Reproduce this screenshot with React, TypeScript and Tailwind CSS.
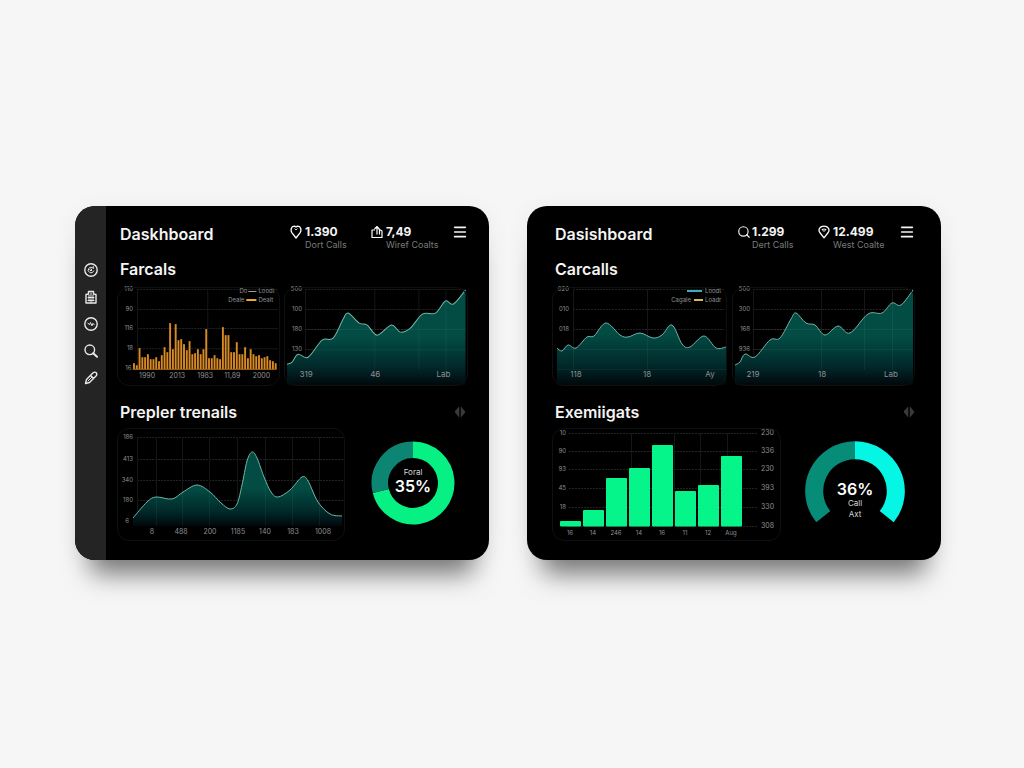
import React from 'react'
import { Search, Menu } from 'lucide-react'

type Point = [number, number]
type Label = [number, number, string]

// Catmull-Rom spline through the points, as cubic beziers
const curve = (pts: Point[]) => {
    let d = `M${pts[0][0]} ${pts[0][1]}`
    for (let i = 0; i < pts.length - 1; i++) {
        const a = pts[i - 1] ?? pts[i]
        const b = pts[i]
        const c = pts[i + 1]
        const e = pts[i + 2] ?? c
        d += ` C${b[0] + (c[0] - a[0]) / 6} ${b[1] + (c[1] - a[1]) / 6} ${c[0] - (e[0] - b[0]) / 6} ${c[1] - (e[1] - b[1]) / 6} ${c[0]} ${c[1]}`
    }
    return d
}

const Grid = ({ rows, cols, x1, x2, bottom }: { rows: number[], cols: number[], x1: number, x2: number, bottom: number }) => (
    <g stroke="#202323">
        {rows.map((y) => <path key={y} d={`M${x1} ${y + 0.5}H${x2}`} strokeDasharray="2 1" />)}
        {cols.map((x) => <path key={x} d={`M${x + 0.5} ${rows[0]}V${bottom}`} stroke="#141717" />)}
    </g>
)

const Labels = ({ items, size, anchor = 'middle' }: { items: Label[], size: number, anchor?: 'start' | 'middle' | 'end' }) => (
    <g fill="#8d9090" fontSize={size} textAnchor={anchor}>
        {items.map(([x, y, t], i) => <text key={i} x={x} y={y + 2}>{t}</text>)}
    </g>
)

const Area = ({ id, points, bottom, fadeFrom }: { id: string, points: Point[], bottom: number, fadeFrom: number }) => {
    const line = curve(points)
    const last = points[points.length - 1][0]
    return (
        <g>
            <linearGradient id={id} gradientUnits="userSpaceOnUse" x1="0" y1={fadeFrom} x2={0} y2={bottom}>
                <stop offset="0" stopColor="#024c43" />
                <stop offset="0.6" stopColor="#012a2b" />
                <stop offset="1" stopColor="#01080c" />
            </linearGradient>
            <path d={`${line} L${last} ${bottom} H${points[0][0]} Z`} fill={`url(#${id})`} />
            <path d={line} fill="none" stroke="#6fb5aa" />
        </g>
    )
}

const Frame = ({ title, width, height, children }: { title: string, width: number, height: number, children: React.ReactNode }) => (
    <div className="rounded-xl outline outline-[#0e1111] -outline-offset-1">
        <svg viewBox={`0 0 ${width} ${height}`} role="img" aria-label={title} className="block w-full overflow-visible">
            {children}
        </svg>
    </div>
)

const callBars = [6, 4, 21, 12, 12, 15, 10, 10, 12, 8, 14, 22, 17, 46, 20, 45, 29, 30, 25, 19, 28, 15, 16, 20, 15, 20, 40, 11, 11, 14, 11, 10, 42, 34, 34, 17, 17, 27, 15, 15, 22, 11, 20, 15, 13, 14, 11, 12, 13, 9, 8, 6]

const FarcalsBars = () => (
    <Frame title="Farcals" width={163} height={99}>
        <Grid rows={[2, 22, 41, 61]} cols={[20, 90]} x1={20} x2={160} bottom={82} />
        {callBars.map((h, i) => (
            <rect key={i} x={16 + i * 2.77} y={82 - h} width="1.9" height={h} fill="#d98a22" />
        ))}
        <path d="M16 82H159" stroke="#b8701a" />
        <Labels size={6} anchor="end" items={[[16, 2, '110'], [16, 22, '90'], [16, 41, '116'], [16, 61, '18'], [16, 81, '16.']]} />
        <Labels size={7} items={[[30, 89, '1990'], [60, 89, '2013'], [88, 89, '1983'], [115, 89, '11,89'], [144, 89, '2000']]} />
        <Labels size={6} anchor="end" items={[[130, 4, 'Do'], [127, 13, 'Deale']]} />
        <Labels size={6} anchor="start" items={[[141, 4, 'Loodt'], [141, 13, 'Dealt']]} />
        <path d="M131 4.5H139" stroke="#9a9fa2" />
        <path d="M129 13H139" stroke="#efa936" strokeWidth="2" />
    </Frame>
)

const FarcalsArea = () => (
    <Frame title="Farcals trend" width={183} height={99}>
        <Grid rows={[2, 22, 42, 62]} cols={[21, 90, 134, 161]} x1={21} x2={181} bottom={83} />
        <Area id="farcals" bottom={98} fadeFrom={50} points={[[3, 77], [8, 75], [14, 67], [24, 70], [38, 53], [49, 51], [59, 32], [64, 26], [75, 36], [83, 38], [93, 48], [107, 38], [116, 45], [126, 41], [138, 27], [151, 26], [161, 14], [169, 17], [181, 3]]} />
        <path d="M90.5 48V83M134.5 31V83M161.5 15V83M21 42.5H181M21 62.5H181" stroke="#ffffff" strokeOpacity="0.05" />
        <Labels size={6} anchor="end" items={[[18, 2, '500'], [18, 22, '100'], [18, 42, '180'], [18, 62, '130']]} />
        <Labels size={8} items={[[22, 88, '319'], [91, 88, '46'], [159, 88, 'Lab']]} />
    </Frame>
)

const CarcallsArea = () => (
    <Frame title="Carcalls" width={175} height={99}>
        <Grid rows={[2, 22, 42]} cols={[21, 95]} x1={21} x2={172} bottom={82} />
        <Area id="carcalls" bottom={98} fadeFrom={46} points={[[5, 61], [10, 64], [16, 58], [24, 61], [35, 50], [42, 49], [54, 36], [68, 48], [76, 50], [88, 46], [101, 51], [110, 48], [120, 38], [130, 57], [138, 60], [152, 49], [164, 61], [174, 60]]} />
        <path d="M21.5 61V82M95.5 48V82M5 62.5H174M5 82.5H174" stroke="#ffffff" strokeOpacity="0.05" />
        <Labels size={6} anchor="end" items={[[17, 2, '020'], [17, 22, '010'], [17, 42, '018']]} />
        <Labels size={8} items={[[24, 88, '118'], [95, 88, '18'], [158, 88, 'Ay']]} />
        <Labels size={6} anchor="end" items={[[139, 13, 'Cagale']]} />
        <Labels size={6} anchor="start" items={[[153, 4, 'Loodt'], [153, 13, 'Loadr']]} />
        <path d="M135 4H150" stroke="#3fa9bd" strokeWidth="2" />
        <path d="M142 13H151" stroke="#d9b84a" strokeWidth="2" />
    </Frame>
)

const CarcallsTrend = () => (
    <Frame title="Carcalls trend" width={183} height={99}>
        <Grid rows={[2, 22, 42, 62]} cols={[21, 89, 132, 160]} x1={21} x2={181} bottom={83} />
        <Area id="carcallsTrend" bottom={98} fadeFrom={50} points={[[3, 78], [8, 75], [13, 67], [23, 70], [38, 53], [48, 51], [59, 32], [64, 26], [74, 36], [83, 38], [93, 48], [106, 39], [118, 46], [136, 27], [150, 26], [160, 16], [169, 18], [181, 3]]} />
        <path d="M89.5 46V83M132.5 31V83M160.5 17V83M21 42.5H181M21 62.5H181" stroke="#ffffff" strokeOpacity="0.05" />
        <Labels size={6} anchor="end" items={[[18, 2, '500'], [18, 22, '300'], [18, 42, '168'], [18, 62, '936']]} />
        <Labels size={8} items={[[21, 88, '219'], [90, 88, '18'], [159, 88, 'Lab']]} />
    </Frame>
)

const TrendArea = () => (
    <Frame title="Prepler trenails" width={228} height={113}>
        <Grid rows={[9, 31, 52, 72]} cols={[20, 39, 65, 92, 120, 148, 175, 202]} x1={20} x2={226} bottom={98} />
        <Area id="trenails" bottom={98} fadeFrom={60} points={[[16, 90], [30, 74], [39, 69], [55, 71], [66, 64], [80, 57], [93, 64], [104, 75], [113, 81], [120, 76], [125, 57], [130, 33], [135, 24], [140, 30], [147, 49], [154, 64], [161, 69], [173, 62], [185, 49], [191, 53], [201, 74], [213, 86], [225, 88]]} />
        <path d="M39.5 70V98M65.5 65V98M92.5 64V98M148.5 54V98M175.5 60V98M202.5 78V98" stroke="#ffffff" strokeOpacity="0.05" />
        <Labels size={6} anchor="end" items={[[16, 9, '186'], [16, 31, '413'], [16, 52, '340'], [16, 72, '180'], [12, 93, '6']]} />
        <Labels size={7} items={[[35, 104, '8'], [64, 104, '488'], [93, 104, '200'], [121, 104, '1185'], [148, 104, '140'], [176, 104, '183'], [206, 104, '1008']]} />
    </Frame>
)

const monthBars = [
    { x: 8, y: 93, label: '16' },
    { x: 31, y: 82, label: '14' },
    { x: 54, y: 50, label: '246' },
    { x: 77, y: 40, label: '14' },
    { x: 100, y: 17, label: '16' },
    { x: 123, y: 63, label: '11' },
    { x: 146, y: 57, label: '12' },
    { x: 169, y: 28, label: 'Aug' },
]

const MonthChart = () => (
    <Frame title="Exemiigats" width={229} height={113}>
        <Grid rows={[5, 23, 41, 60, 79, 98]} cols={[79, 122, 148, 175]} x1={17} x2={206} bottom={98} />
        {monthBars.map((b) => (
            <rect key={b.x} x={b.x} y={b.y} width="21" height={98.5 - b.y} rx="1" fill="#05f58a" />
        ))}
        <Labels size={6} anchor="end" items={[[14, 5, '10'], [14, 23, '90'], [14, 41, '93'], [14, 60, '45'], [14, 79, '18']]} />
        <Labels size={7} anchor="start" items={[[209, 5, '230'], [209, 23, '336'], [209, 41, '230'], [209, 60, '393'], [209, 79, '330'], [209, 98, '308']]} />
        <Labels size={6} items={monthBars.map((b): Label => [b.x + 10, 105, b.label])} />
    </Frame>
)

const Donut = () => (
    <svg viewBox="-42 -42 84 84" role="img" aria-label="Foral 35%" className="block w-full" textAnchor="middle">
        <g fill="none" strokeWidth="16.5">
            <path d="M0 -33.2A33.2 33.2 0 1 1 -32.2 8" stroke="#06f084" />
            <path d="M-32.2 8A33.2 33.2 0 0 1 0 -33.2" stroke="#0c8673" />
        </g>
        <text y="-8" fontSize="8" fill="#d8d8d8">Foral</text>
        <text y="9" fontSize="16" fontWeight="600" fill="#fff">35%</text>
    </svg>
)

const Gauge = () => (
    <svg viewBox="-50 -50 100 84" role="img" aria-label="36% Call Axt" className="block w-full" textAnchor="middle">
        <g fill="none" strokeWidth="18">
            <path d="M-31.7 25.7A40.8 40.8 0 0 1 0 -40.8" stroke="#078c78" />
            <path d="M0 -40.8A40.8 40.8 0 0 1 31.7 25.7" stroke="#05f6e4" />
        </g>
        <text y="4" fontSize="16" fontWeight="600" fill="#fff">36%</text>
        <text y="15" fontSize="8" fill="#d8d8d8">Call</text>
        <text y="26" fontSize="8" fill="#d8d8d8">Axt</text>
    </svg>
)

const PinIcon = () => (
    <svg viewBox="0 0 12 14" className="h-[14px] w-3" fill="none" stroke="#fff" strokeWidth="1.3" strokeLinejoin="round">
        <path d="M6 13L2 7.8C.2 5 1.2 1.2 4.2 1.1C5 1.1 5.5 1.5 6 1.9C6.5 1.5 7 1.1 7.8 1.1C10.8 1.2 11.8 5 10 7.8Z" />
        <path d="M4.5 3.5L6 5L7.5 3.5" strokeWidth="0.8" />
    </svg>
)

const HouseIcon = () => (
    <svg viewBox="0 0 12 14" className="h-[14px] w-3" fill="none" stroke="#fff" strokeWidth="1.2" strokeLinejoin="round">
        <path d="M4 5H1V12.5H11V6L8.5 4.5M6 9.5V1.5L3.5 4M6 1.5L8.5 4.5V9.5" />
    </svg>
)

const ShieldPinIcon = () => (
    <svg viewBox="0 0 12 14" className="h-[14px] w-3" fill="none" stroke="#fff" strokeWidth="1.3" strokeLinejoin="round">
        <path d="M6 12.8L1.8 7.5C-.2 4.5 2 1.2 6 1.2S12.2 4.5 10.2 7.5Z" />
        <path d="M4 4.5L6 6.5L8 4.5L6 4Z" strokeWidth="1" />
    </svg>
)

const SwapIcon = () => (
    <svg viewBox="0 0 12 14" className="h-[14px] w-3" fill="#3a3a3a">
        <path d="M5.3 1.5V12.5L4 11L1 7.5V6L4 2.8Z M6.8 1.3L11.5 7L6.8 12.7Z" />
    </svg>
)

const sideIcons = [
    {
        name: 'Overview',
        icon: <><circle cx="7" cy="7" r="6.2" /><path d="M9 5A2.8 2.8 0 1 0 9.7 8M7 6L8 7L7 8L6 7ZM9.3 3.5V5.3" strokeWidth="1" /></>,
    },
    {
        name: 'Company',
        icon: <><path d="M2 13V4.5L4.5 4V1.5H9.5V4L12 4.5V13Z" /><path d="M5 5V11M9 5V11M7 3V13M4 7.5H10M4 10.5H10" strokeWidth="1" /></>,
    },
    {
        name: 'Activity',
        icon: <><circle cx="7" cy="7" r="6.2" /><path d="M3.8 6L5.5 7.8L6.5 5.5L8 8.8L8.8 6.5L10.2 7.5" strokeWidth="1" /></>,
    },
    {
        name: 'Search',
        icon: <><circle cx="5.8" cy="5.8" r="4.8" /><path d="M9.2 9.2L13 12.8" strokeWidth="2" /></>,
    },
    {
        name: 'Edit',
        icon: <><path d="M1.5 12.5L2.5 8.5L8.8 2C10 1 11.5 1 12.3 1.8C13 2.8 12.8 4 12 5L5.5 11.5ZM6.5 4.5L9.5 7.5" /><path d="M4 10L8 6" strokeWidth="1" /></>,
    },
]

const Sidebar = () => (
    <nav aria-label="Main" className="flex w-[31px] shrink-0 flex-col items-center gap-[13px] bg-[#242424] pl-px pt-[57px]">
        {sideIcons.map((item) => (
            <button key={item.name} aria-label={item.name}>
                <svg viewBox="0 0 14 14" className="block size-[14px]" fill="none" stroke="#e8e8e8" strokeWidth="1.4" strokeLinecap="round" strokeLinejoin="round">
                    {item.icon}
                </svg>
            </button>
        ))}
    </nav>
)

const Stat = ({ icon, value, label }: { icon: React.ReactNode, value: string, label: string }) => (
    <div className="flex w-[81px] gap-[3px]">
        <div className="w-3 shrink-0 pt-px">{icon}</div>
        <div className="whitespace-nowrap">
            <p className="text-xs font-bold leading-4">{value}</p>
            <p className="text-[9px] leading-[10px] text-[#777b7b]">{label}</p>
        </div>
    </div>
)

const Header = ({ title, children }: { title: string, children: React.ReactNode }) => (
    <header className="flex h-7 items-start justify-between pl-[3px]">
        <h1 className="text-base font-semibold leading-6">{title}</h1>
        <div className="flex self-end">
            {children}
            <button aria-label="Menu" className="self-start">
                <Menu className="size-4" strokeWidth={2.5} />
            </button>
        </div>
    </header>
)

const heading = "pl-[3px] text-base font-semibold leading-6"

const App = () => {
    return (
        <main className="grid min-h-screen grid-cols-2 content-center gap-[38px] bg-[#f6f6f6] pb-[2px] pl-[75px] pr-[83px] font-['Inter','Liberation_Sans',sans-serif] text-[#f4f4f4]">
            <section className="flex overflow-hidden rounded-[20px] bg-black shadow-[0_30px_26px_-16px_rgba(0,0,0,0.5),0_4px_24px_rgba(0,0,0,0.06)]">
                <Sidebar />
                <div className="min-w-0 grow pb-[19px] pl-[11px] pr-[21px] pt-4">
                    <Header title="Daskhboard">
                        <Stat icon={<PinIcon />} value="1.390" label="Dort Calls" />
                        <Stat icon={<HouseIcon />} value="7,49" label="Wiref Coalts" />
                    </Header>
                    <h2 className={`mt-[7px] ${heading}`}>Farcals</h2>
                    <div className="mt-[6px] grid grid-cols-[163fr_183fr] gap-1">
                        <FarcalsBars />
                        <FarcalsArea />
                    </div>
                    <div className="mt-[14px] flex items-center justify-between pr-[2px]">
                        <h2 className={heading}>Prepler trenails</h2>
                        <button aria-label="Switch view"><SwapIcon /></button>
                    </div>
                    <div className="mt-1 grid grid-cols-[1fr_84px] items-start gap-[26px] pr-[13px]">
                        <TrendArea />
                        <div className="pt-[13px]"><Donut /></div>
                    </div>
                </div>
            </section>

            <section className="overflow-hidden rounded-[20px] bg-black pb-[19px] pl-[25px] pr-[26px] pt-4 shadow-[0_30px_26px_-16px_rgba(0,0,0,0.5),0_4px_24px_rgba(0,0,0,0.06)]">
                <Header title="Dasishboard">
                    <Stat icon={<Search className="size-[14px]" />} value="1.299" label="Dert Calls" />
                    <Stat icon={<ShieldPinIcon />} value="12.499" label="West Coalte" />
                </Header>
                <h2 className={`mt-[7px] ${heading}`}>Carcalls</h2>
                <div className="mt-[6px] grid grid-cols-[175fr_183fr] gap-[5px]">
                    <CarcallsArea />
                    <CarcallsTrend />
                </div>
                <div className="mt-[14px] flex items-center justify-between">
                    <h2 className={heading}>Exemiigats</h2>
                    <button aria-label="Switch view"><SwapIcon /></button>
                </div>
                <div className="mt-1 grid grid-cols-[1fr_100px] items-start gap-6 pr-[10px]">
                    <MonthChart />
                    <div className="pt-[13px]"><Gauge /></div>
                </div>
            </section>
        </main>
    )
}
export default App
